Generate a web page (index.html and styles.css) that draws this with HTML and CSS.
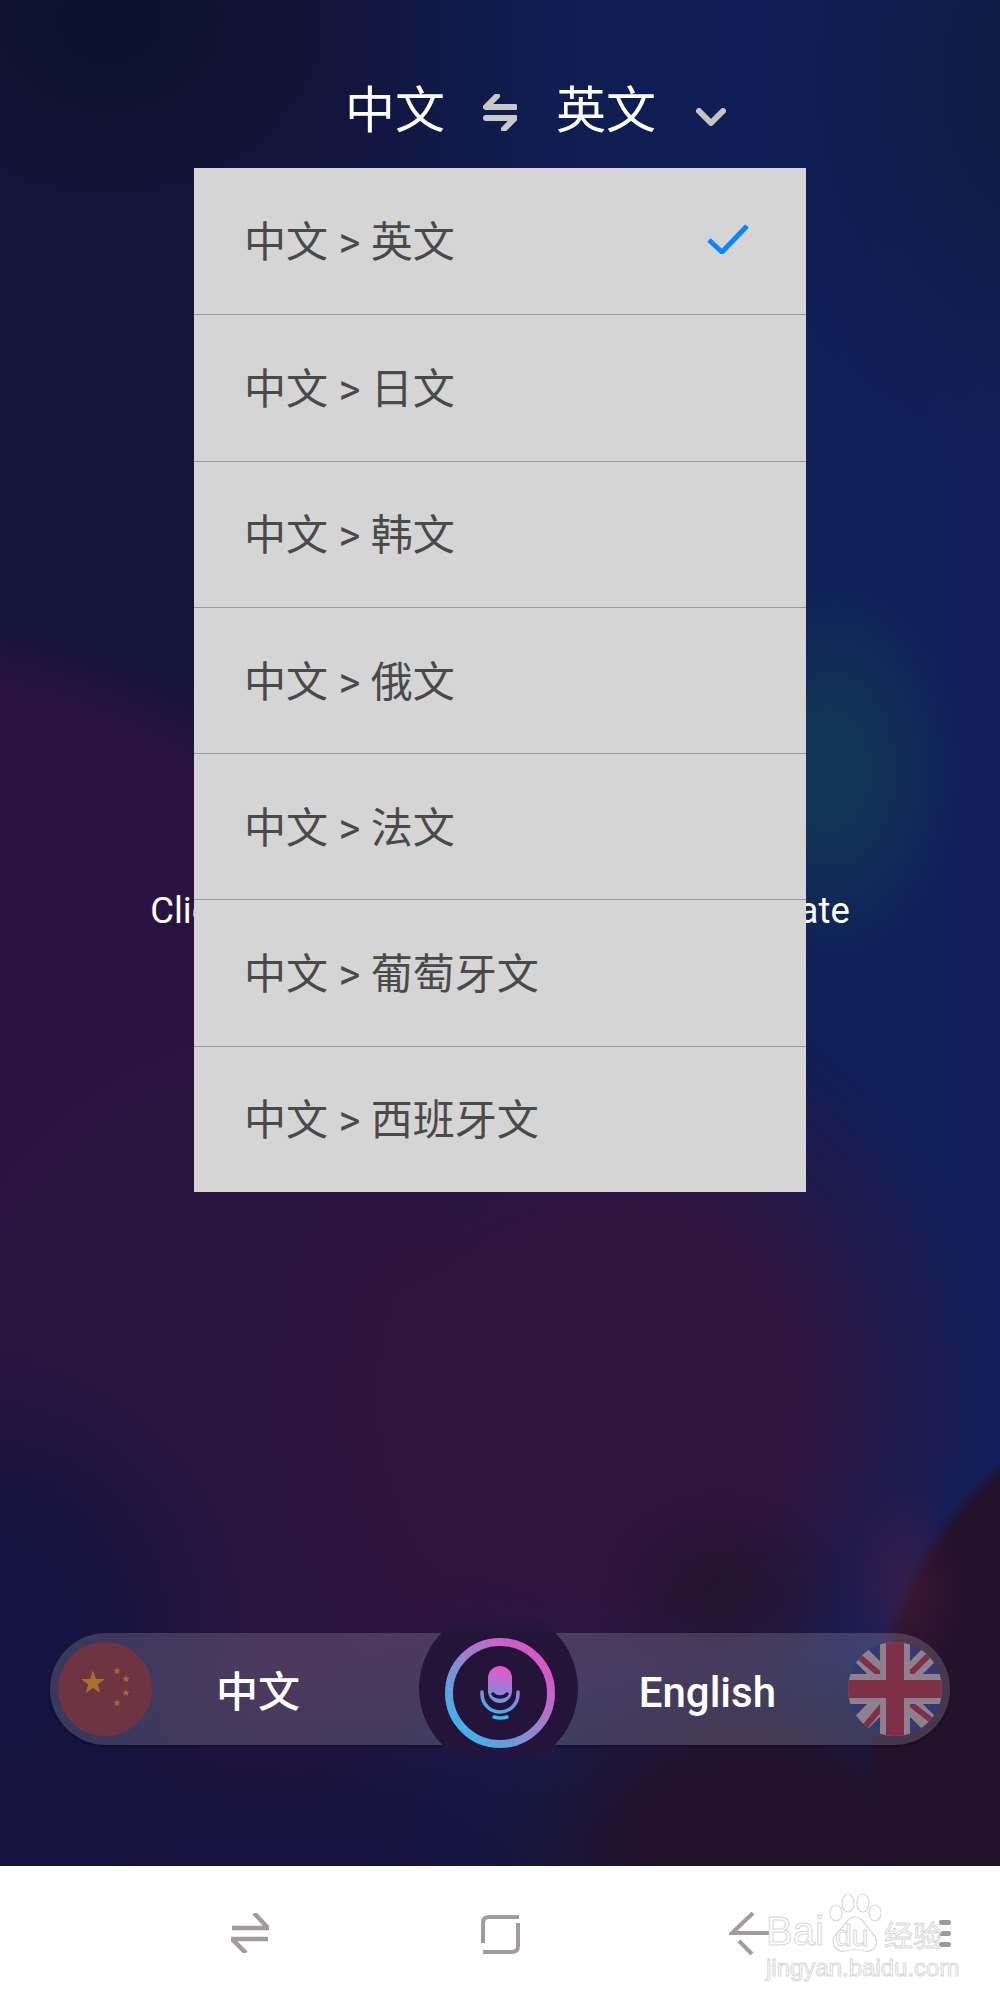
FILE: index.html
```html
<!DOCTYPE html>
<html lang="zh">
<head>
<meta charset="utf-8">
<title>翻译</title>
<link rel="stylesheet" href="styles.css">
</head>
<body>
<main class="stage">
  <header class="top">
    <span class="top-lang">中文</span>
    <svg class="top-swap" viewBox="0 0 34 37"><path d="M14 2 L3 13 H32" /><path d="M32 24 H3 M32 24 L21 35" /></svg>
    <span class="top-lang">英文</span>
    <svg class="top-chev" viewBox="0 0 30 18"><path d="M3 3 L15 15 L27 3" /></svg>
  </header>
  <p class="hint">Click on the microphone button to translate</p>
  <section class="bar">
    <div class="pill pill-left">
      <svg class="flag" viewBox="0 0 94 94">
        <circle cx="47" cy="47" r="47" fill="#6f3441"/>
        <polygon class="star" points="0,-12.500 2.900,-4 12,-4 4.700,1.500 7.400,10 0,5 -7.400,10 -4.700,1.500 -12,-4 -2.900,-4" transform="translate(35 41)"/>
        <polygon class="star" points="0,-4 .9,-1.300 3.800,-1.300 1.500,.5 2.400,3.200 0,1.600 -2.400,3.200 -1.500,.5 -3.800,-1.300 -.9,-1.300" transform="translate(59 29)"/>
        <polygon class="star" points="0,-4 .9,-1.300 3.800,-1.300 1.500,.5 2.400,3.200 0,1.600 -2.400,3.200 -1.500,.5 -3.800,-1.300 -.9,-1.300" transform="translate(68 37)"/>
        <polygon class="star" points="0,-4 .9,-1.300 3.800,-1.300 1.500,.5 2.400,3.200 0,1.600 -2.400,3.200 -1.500,.5 -3.800,-1.300 -.9,-1.300" transform="translate(68 51)"/>
        <polygon class="star" points="0,-4 .9,-1.300 3.800,-1.300 1.500,.5 2.400,3.200 0,1.600 -2.400,3.200 -1.500,.5 -3.800,-1.300 -.9,-1.300" transform="translate(59 61)"/>
      </svg>
      <span class="pill-label">中文</span>
    </div>
    <div class="pill pill-right">
      <span class="pill-label">English</span>
      <svg class="flag" viewBox="0 0 94 94">
        <defs><clipPath id="uk"><circle cx="47" cy="47" r="47"/></clipPath></defs>
        <g clip-path="url(#uk)">
          <rect width="94" height="94" fill="#353a70"/>
          <path d="M0 0 L94 94 M94 0 L0 94" stroke="#8e808e" stroke-width="18"/>
          <path d="M8 12 L36 36 M60 34 L82 12 M14 88 L36 62 M60 60 L88 82" stroke="#7e3049" stroke-width="6"/>
          <path d="M47 0 V94 M0 47 H94" stroke="#8e808e" stroke-width="30"/>
          <path d="M47 0 V94 M0 47 H94" stroke="#7e3049" stroke-width="18"/>
        </g>
      </svg>
    </div>
    <div class="hub">
      <svg class="mic" viewBox="0 0 112 112">
        <defs>
          <linearGradient id="ring" x1="0" y1="1" x2="1" y2="0"><stop offset="0" stop-color="#26c0ee"/><stop offset=".55" stop-color="#a47cc8"/><stop offset="1" stop-color="#ee48c0"/></linearGradient>
          <linearGradient id="body" gradientUnits="userSpaceOnUse" x1="62" y1="29" x2="50" y2="82"><stop offset="0" stop-color="#ee50c8"/><stop offset="1" stop-color="#30bcec"/></linearGradient>
        </defs>
        <circle cx="56" cy="56" r="51" fill="none" stroke="url(#ring)" stroke-width="8"/>
        <rect x="44" y="29" width="24" height="37" rx="12" fill="url(#body)"/>
        <path d="M49 57 a8 6 0 0 0 14 0" fill="none" stroke="#24143a" stroke-width="3.500" stroke-linecap="round"/>
        <path d="M38 55 v2 a18 18 0 0 0 36 0 v-2" fill="none" stroke="url(#body)" stroke-width="3.500" stroke-linecap="round"/>
        <path d="M50 80 q6.500 2 13 0" fill="none" stroke="#30bcec" stroke-width="3.500" stroke-linecap="round"/>
      </svg>
    </div>
  </section>
  <ul class="menu">
    <li class="menu-row"><span>中文 &gt; 英文</span><svg class="check" viewBox="0 0 42 30"><path d="M2 16 L15 28 L40 2"/></svg></li>
    <li class="menu-row"><span>中文 &gt; 日文</span></li>
    <li class="menu-row"><span>中文 &gt; 韩文</span></li>
    <li class="menu-row"><span>中文 &gt; 俄文</span></li>
    <li class="menu-row"><span>中文 &gt; 法文</span></li>
    <li class="menu-row"><span>中文 &gt; 葡萄牙文</span></li>
    <li class="menu-row"><span>中文 &gt; 西班牙文</span></li>
  </ul>
</main>
<nav class="nav">
  <svg class="nav-icon nav-swap" viewBox="0 0 38 40"><path d="M23 0 L37 15 H1 M37 26 H1 L15 40"/></svg>
  <svg class="nav-icon nav-square" viewBox="0 0 39 40"><path d="M38 3 H8 Q2 3 2 9 V29 M2 38 H31 Q37 38 37 32 V9"/></svg>
  <svg class="nav-icon nav-back" viewBox="0 0 41 44"><path d="M24 1 L3 21 H40 M10 29 L23 42"/></svg>
  <div class="nav-dashes"><i></i><i></i><i></i></div>
</nav>
<div class="mark">
  <svg class="mark-paw" viewBox="0 0 54 60"><g fill="#fff" stroke="#d8d8d8" stroke-width="1.200"><ellipse cx="21" cy="10" rx="6" ry="9"/><ellipse cx="36" cy="10" rx="6" ry="9"/><ellipse cx="9" cy="20" rx="6" ry="8"/><ellipse cx="48" cy="20" rx="6" ry="8"/><path d="M28 24 C20 24 18 33 9 41 C2 50 9 60 19 58 C25 56 31 56 37 58 C47 60 54 50 46 41 C38 33 36 24 28 24 Z"/></g></svg>
  <span class="mark-bai">Bai</span>
  <span class="mark-du">du</span>
  <span class="mark-cn">经验</span>
  <span class="mark-url">jingyan.baidu.com</span>
</div>
</body>
</html>
```
FILE: styles.css
```css
* { box-sizing: border-box; }
html, body { margin: 0; padding: 0; }
body { width: 1000px; height: 2000px; overflow: hidden; position: relative; background: #fff; font-family: Roboto, "Noto Sans CJK SC", sans-serif; }
.stage {
  position: relative;
  height: 1866px;
  display: flex;
  flex-direction: column;
  overflow: hidden;
  background:
    radial-gradient(ellipse 130px 200px at 830px 770px, rgba(18,66,84,.62) 25%, rgba(18,60,90,0) 100%),
    radial-gradient(ellipse 60px 110px at 905px 1590px, rgba(104,30,66,.35), rgba(90,25,60,0) 100%),
    radial-gradient(circle 385px at 1250px 1750px, #22122a 96%, rgba(34,18,42,0) 100%),
    radial-gradient(ellipse 300px 190px at 760px 1840px, #22122a 40%, rgba(34,18,42,0) 100%),
    radial-gradient(ellipse 130px 110px at 720px 1590px, rgba(34,20,44,.85) 10%, rgba(34,20,44,0) 100%),
    radial-gradient(ellipse 420px 180px at 250px 1890px, #17123f 30%, rgba(23,18,63,0) 100%),
    radial-gradient(ellipse 280px 300px at -20px 1640px, #15133f 35%, rgba(21,19,63,0) 100%),
    radial-gradient(ellipse 380px 420px at 620px 1400px, #30143f 45%, rgba(48,20,63,0) 100%),
    radial-gradient(ellipse 380px 440px at 280px 1460px, #291540 50%, rgba(41,21,64,0) 100%),
    radial-gradient(ellipse 700px 490px at -200px 1080px, #2a1340 84%, rgba(42,19,64,0) 100%),
    radial-gradient(ellipse 240px 200px at 110px 20px, #0b1230 20%, rgba(11,18,48,0) 100%),
    radial-gradient(ellipse 300px 420px at 1050px 80px, #0d1c42 10%, rgba(13,28,66,0) 100%),
    linear-gradient(90deg, #13143a 0%, #13143a 30%, #0f1d52 55%, #0f1f58 85%, #11205a 100%);
}
.top { display: flex; align-items: center; height: 67px; margin-top: 78px; padding-left: 345px; color: #fff; }
.top-lang { font-size: 50px; line-height: 67px; }
.top-swap { width: 34px; height: 37px; margin: 2px 39px 0 38px; fill: none; stroke: #c9c9c9; stroke-width: 6; stroke-linecap: round; stroke-linejoin: round; }
.top-chev { width: 30px; height: 18px; margin: 10px 0 0 40px; fill: none; stroke: #c4c4c4; stroke-width: 6; stroke-linecap: round; stroke-linejoin: round; }
.hint { margin: 741px 0 0; text-align: center; font-size: 36.500px; line-height: 50px; color: #fff; white-space: nowrap; }
.bar { position: relative; display: flex; justify-content: space-between; margin: auto 50px 121px; }
.pill { display: flex; align-items: center; width: 392px; height: 112px; background: rgba(255,255,255,.16); box-shadow: 0 2px 2px rgba(0,0,0,.25); }
.pill-left { border-radius: 56px 0 0 56px; padding-left: 8px; }
.pill-right { width: 395px; border-radius: 0 56px 56px 0; padding-right: 8px; justify-content: flex-end; }
.pill-label { color: #fff; font-size: 42px; font-weight: 500; line-height: 50px; padding-top: 8px; }
.pill-left .pill-label { margin-left: 64px; }
.pill-right .pill-label { margin-right: 72px; }
.flag { width: 94px; height: 94px; flex: none; }
.star { fill: #a8702f; }
.hub { position: absolute; left: 369px; top: -24px; width: 159px; height: 159px; border-radius: 50%; background: linear-gradient(180deg, rgba(36,20,58,0) 4%, #24143a 15.500%, #24143a 87%, rgba(36,20,58,0) 97%); display: flex; align-items: center; justify-content: center; }
.mic { width: 112px; height: 112px; margin: 8px 0 0 3px; }
.menu { position: absolute; left: 194px; top: 168px; width: 612px; margin: 0; padding: 0; list-style: none; background: #d5d5d5; }
.menu-row { display: flex; align-items: center; justify-content: space-between; height: 146.300px; padding: 0 57px 5px 50px; border-top: 1px solid #9a9a9a; color: #4a4a4a; font-size: 42px; }
.menu-row:first-child { border-top: 0; }
.check { width: 42px; height: 30px; fill: none; stroke: #0a84ff; stroke-width: 5; }
.nav { position: relative; height: 134px; background: #fff; display: flex; align-items: flex-start; padding-left: 231px; }
.nav-icon { fill: none; stroke: #a39c9c; stroke-width: 4.500; flex: none; }
.nav-swap { width: 38px; height: 40px; margin-top: 47px; }
.nav-square { width: 39px; height: 40px; margin: 48px 0 0 212px; stroke-width: 4; }
.nav-back { width: 41px; height: 44px; margin: 46px 0 0 209px; stroke-width: 4; }
.nav-dashes { position: absolute; left: 939px; top: 54px; display: flex; flex-direction: column; gap: 6px; }
.nav-dashes i { display: block; width: 12px; height: 5px; background: #9a9a9a; border-radius: 2px; }
.mark { position: absolute; left: 766px; top: 1893px; width: 180px; height: 85px; }
.mark-paw { position: absolute; left: 61px; top: 0; width: 54px; height: 60px; }
.mark-bai, .mark-du, .mark-cn, .mark-url { position: absolute; color: #fff; -webkit-text-stroke: 1px #d8d8d8; white-space: nowrap; font-family: "Liberation Sans", sans-serif; }
.mark-bai { left: 0; top: 20px; font-size: 40px; line-height: 36px; }
.mark-du { left: 69px; top: 30px; font-size: 30px; line-height: 26px; }
.mark-cn { left: 118px; top: 24px; font-size: 29px; line-height: 34px; font-family: "Noto Sans CJK SC", sans-serif; }
.mark-url { left: 0; top: 63px; font-size: 24px; line-height: 24px; }
```
